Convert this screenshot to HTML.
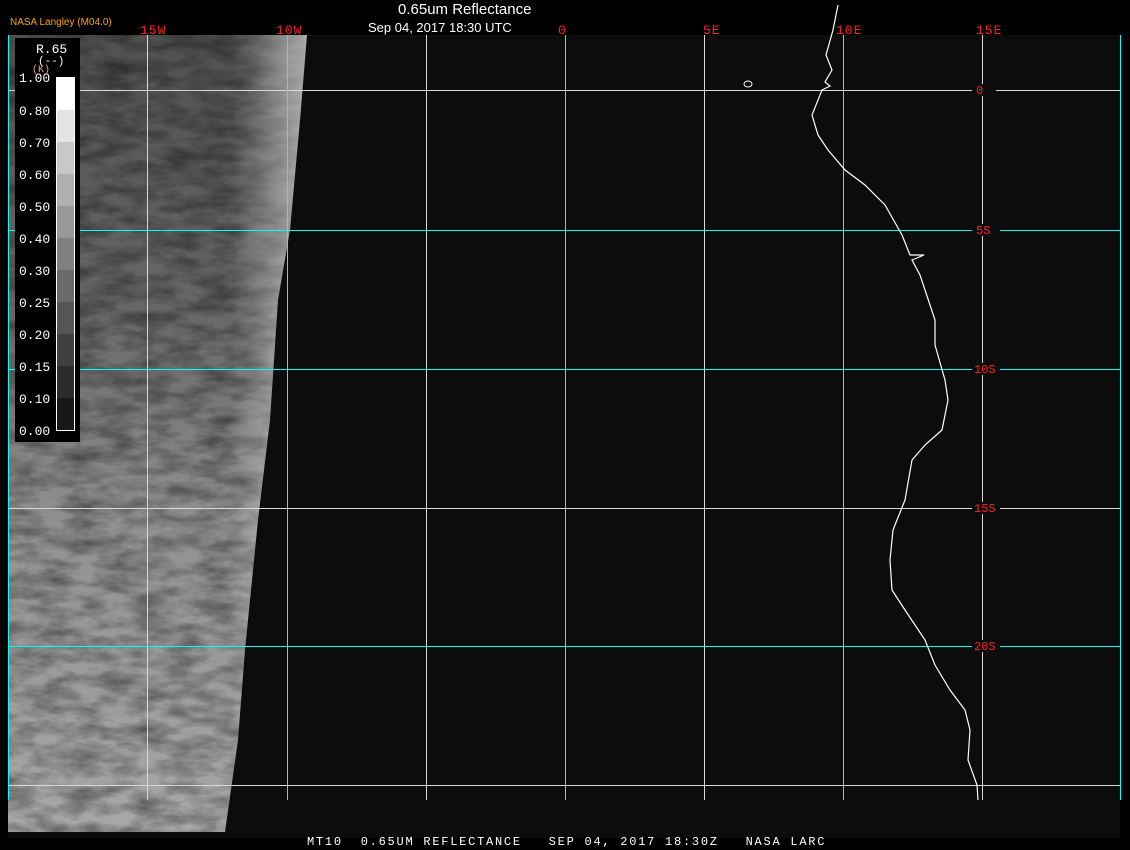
<!DOCTYPE html>
<html><head><style>
html,body{margin:0;padding:0;background:#000;width:1130px;height:850px;overflow:hidden;font-family:"Liberation Sans",sans-serif}
.t{position:absolute;white-space:pre}
</style></head><body>
<svg width="1130" height="850" style="position:absolute;left:0;top:0">
<defs>
<filter id="cl" x="0" y="0" width="100%" height="100%">
<feTurbulence type="fractalNoise" baseFrequency="0.03 0.08" numOctaves="4" seed="3"/>
<feColorMatrix type="matrix" values="0 0 0 0 0  0 0 0 0 0  0 0 0 0 0  0 0 0 -1.6 1.1"/>
</filter>
<linearGradient id="g" x1="0" y1="0" x2="0" y2="1">
<stop offset="0" stop-color="#505050"/><stop offset="0.35" stop-color="#686868"/><stop offset="0.6" stop-color="#909090"/><stop offset="1" stop-color="#a8a8a8"/>
</linearGradient>
<linearGradient id="e" x1="0" y1="0" x2="1" y2="0">
<stop offset="0.75" stop-color="#fff" stop-opacity="0"/><stop offset="1" stop-color="#fff" stop-opacity="0.55"/>
</linearGradient>
<clipPath id="cp"><polygon points="8,35 307,35 300,120 290,230 278,300 270,420 258,520 245,650 238,740 225,832 8,832"/></clipPath>
</defs>
<rect x="8" y="35" width="1112" height="803" fill="#0c0c0c"/>
<g clip-path="url(#cp)">
<rect x="8" y="35" width="300" height="800" fill="url(#g)"/>
<rect x="8" y="35" width="300" height="800" filter="url(#cl)" opacity="0.45"/>
<rect x="8" y="35" width="300" height="800" fill="url(#e)"/>
</g>
<g stroke="#d8d8d8" stroke-width="1">
<line x1="147.5" y1="35" x2="147.5" y2="800"/><line x1="426.5" y1="35" x2="426.5" y2="800"/><line x1="704.5" y1="35" x2="704.5" y2="800"/><line x1="982.5" y1="35" x2="982.5" y2="800"/>
<line x1="8" y1="90.5" x2="1120" y2="90.5"/><line x1="8" y1="508.5" x2="1120" y2="508.5"/><line x1="8" y1="785.5" x2="1120" y2="785.5"/>
</g>
<g stroke="#00ffff" stroke-width="1">
<line x1="8.5" y1="35" x2="8.5" y2="800"/><line x1="287.5" y1="35" x2="287.5" y2="800"/><line x1="565.5" y1="35" x2="565.5" y2="800"/><line x1="843.5" y1="35" x2="843.5" y2="800"/><line x1="1120.5" y1="35" x2="1120.5" y2="800"/>
<line x1="8" y1="230.5" x2="1120" y2="230.5"/><line x1="8" y1="369.5" x2="1120" y2="369.5"/><line x1="8" y1="646.5" x2="1120" y2="646.5"/>
</g>
<polyline fill="none" stroke="#fff" stroke-width="1.2" points="838,5 833,30 826,55 832,70 825,82 830,86 822,90 812,115 818,135 828,150 845,170 865,185 885,205 902,235 910,255 924,255 912,260 920,275 925,290 935,320 935,345 945,380 948,400 942,430 925,445 912,460 905,500 893,530 890,560 892,590 905,610 925,640 935,665 950,690 965,710 970,730 968,760 977,785 978,800"/>
<ellipse cx="748" cy="84" rx="4" ry="3" fill="none" stroke="#fff"/>
<rect x="15" y="38" width="65" height="404" fill="#000"/>
<g>
<rect x="56" y="77" width="19" height="33" fill="#fff"/>
<rect x="56" y="110" width="19" height="32" fill="#e4e4e4"/>
<rect x="56" y="142" width="19" height="32" fill="#c8c8c8"/>
<rect x="56" y="174" width="19" height="32" fill="#b0b0b0"/>
<rect x="56" y="206" width="19" height="32" fill="#989898"/>
<rect x="56" y="238" width="19" height="32" fill="#808080"/>
<rect x="56" y="270" width="19" height="32" fill="#6a6a6a"/>
<rect x="56" y="302" width="19" height="32" fill="#555"/>
<rect x="56" y="334" width="19" height="32" fill="#404040"/>
<rect x="56" y="366" width="19" height="32" fill="#2c2c2c"/>
<rect x="56" y="398" width="19" height="32" fill="#181818"/>
<rect x="56.5" y="77.5" width="18" height="353" fill="none" stroke="#fff"/>
</g>
<g font-family="Liberation Mono,monospace" font-size="13" fill="#fff">
<text x="19" y="82">1.00</text><text x="19" y="115">0.80</text><text x="19" y="147">0.70</text><text x="19" y="179">0.60</text><text x="19" y="211">0.50</text><text x="19" y="243">0.40</text><text x="19" y="275">0.30</text><text x="19" y="307">0.25</text><text x="19" y="339">0.20</text><text x="19" y="371">0.15</text><text x="19" y="403">0.10</text><text x="19" y="435">0.00</text>
<text x="36" y="53" font-size="13">R.65</text><text x="38" y="64" font-size="11">(--)</text>
</g>
<text x="32" y="72" font-family="Liberation Mono,monospace" font-size="10" fill="#f4a080">(K)</text>
<g font-family="Liberation Mono,monospace" font-size="13" fill="#ff2020" letter-spacing="1">
<text x="140" y="34">15W</text><text x="276" y="34">10W</text><text x="558" y="34">0</text><text x="703" y="34">5E</text><text x="836" y="34">10E</text><text x="976" y="34">15E</text>
</g>
<g font-family="Liberation Mono,monospace" font-size="12" fill="#ff2020">
<rect x="972" y="84" width="24" height="12" fill="#0c0c0c"/><text x="976" y="94">0</text>
<rect x="972" y="224" width="28" height="12" fill="#0c0c0c"/><text x="976" y="234">5S</text>
<rect x="972" y="363" width="28" height="12" fill="#0c0c0c"/><text x="974" y="373">10S</text>
<rect x="972" y="502" width="28" height="12" fill="#0c0c0c"/><text x="974" y="512">15S</text>
<rect x="972" y="640" width="28" height="12" fill="#0c0c0c"/><text x="974" y="650">20S</text>
</g>
</svg>
<div class="t" style="left:10px;top:17px;font-size:10px;color:#ffa500">NASA Langley (M04.0)</div>
<div class="t" style="left:398px;top:1px;font-size:15px;color:#fff">0.65um Reflectance</div>
<div class="t" style="left:368px;top:20px;font-size:13px;color:#fff">Sep 04, 2017 18:30 UTC</div>
<div class="t" style="left:307px;top:835px;font-size:12px;color:#fff;font-family:'Liberation Mono',monospace;letter-spacing:1.75px">MT10  0.65UM REFLECTANCE   SEP 04, 2017 18:30Z   NASA LARC</div>
</body></html>
